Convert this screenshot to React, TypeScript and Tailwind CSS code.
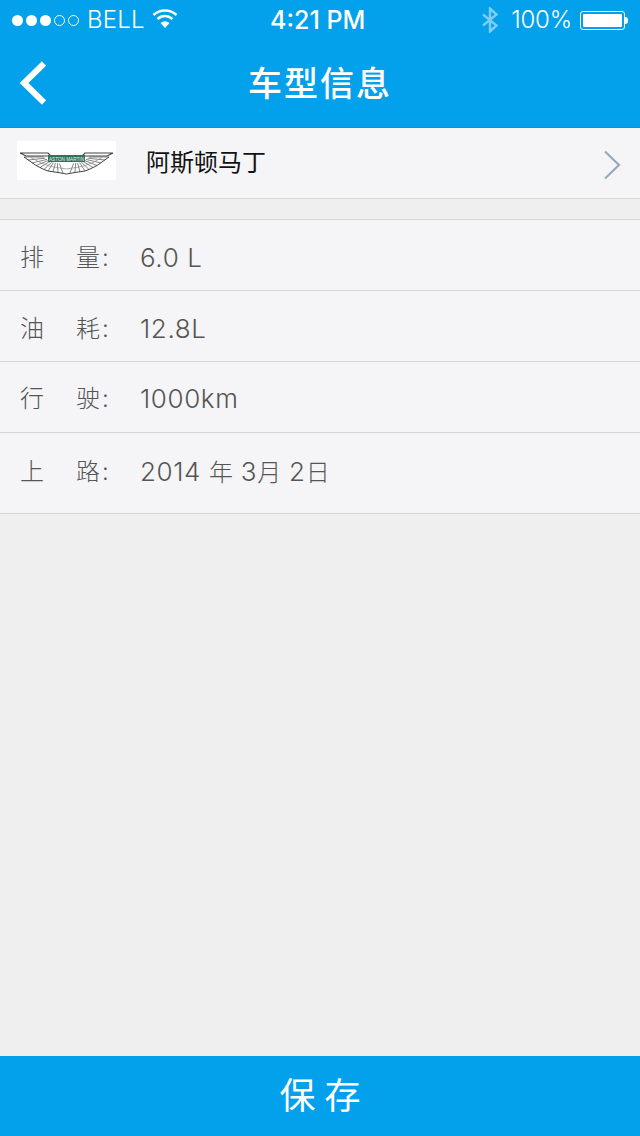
const font = "font-['Inter','Noto_Sans_CJK_SC',sans-serif]";

const specs = [
  { a: '排', b: '量', h: 'h-[71px] pt-[6px]', value: <>6.0 L</> },
  { a: '油', b: '耗', h: 'h-[71px] pt-[6px]', value: <>12.8L</> },
  { a: '行', b: '驶', h: 'h-[71px] pt-[3px]', value: <>1000km</> },
  {
    a: '上',
    b: '路',
    h: 'h-[81px] pb-[3px]',
    value: (
      <>
        2014 <span className="text-[24px] tracking-normal">年</span> 3<span className="text-[24px] tracking-normal">月</span> 2
        <span className="text-[24px] tracking-normal">日</span>
      </>
    ),
  },
];

const fanEnds = [
  [7, 16],
  [11, 19],
  [15, 22],
  [19, 24.5],
  [23, 26.5],
  [27, 28.5],
  [31, 30],
  [36, 31],
  [41, 31.5],
  [46, 32],
];

function AstonLogo() {
  return (
    <svg width="99" height="39" viewBox="0 0 99 39" className="bg-white shrink-0">
      <g fill="none" stroke="#666" strokeWidth="0.8">
        {fanEnds.map(([x, y]) => (
          <g key={x}>
            <path d={`M${40 - (40 - x) * 0.4} ${16 + (y - 16) * 0.4} L${x} ${y}`} />
            <path d={`M${59 + (40 - x) * 0.4} ${16 + (y - 16) * 0.4} L${99 - x} ${y}`} />
          </g>
        ))}
        <path d="M3 12 H31 L34 15 H9 Z" strokeWidth="1.1" stroke="#444" />
        <path d="M96 12 H68 L65 15 H90 Z" strokeWidth="1.1" stroke="#444" />
        <path d="M7 16 L19 24.5 L27 28.5 L31 30 L41 31.5 L49.5 33 L58 31.5 L68 30 L72 28.5 L80 24.5 L92 16" strokeWidth="1" stroke="#444" />
        <path d="M14 16.5 L24 22 L34 25.5 L49.5 28 L65 25.5 L75 22 L85 16.5" strokeWidth="0.7" stroke="#888" />
      </g>
      <rect x="31" y="14" width="37" height="7" fill="#35705c" />
      <text x="32" y="19.8" textLength="35" lengthAdjust="spacingAndGlyphs" fontSize="5.6" fill="#e8f0ec" fontFamily="Liberation Sans, sans-serif">
        ASTON MARTIN
      </text>
    </svg>
  );
}

export default function App() {
  return (
    <div className={`w-[640px] h-[1136px] flex flex-col bg-[#efefef] ${font}`}>
      <header className="h-[128px] shrink-0 bg-[#03a0eb] border-b border-[#0b93d4] text-white flex flex-col">
        <div className="relative h-[40px] flex items-center justify-between pl-3 pr-[12px] font-light text-[24px]">
          <div className="flex items-center">
            <div className="flex gap-[3px]">
              <span className="w-[11px] h-[11px] rounded-full bg-white" />
              <span className="w-[11px] h-[11px] rounded-full bg-white" />
              <span className="w-[11px] h-[11px] rounded-full bg-white" />
              <span className="w-[11px] h-[11px] rounded-full border border-white" />
              <span className="w-[11px] h-[11px] rounded-full border border-white" />
            </div>
            <span className="ml-[8px] leading-none tracking-[0.2px]">BELL</span>
            <svg width="26" height="20" viewBox="0 0 26 20" className="ml-[7px] mb-1" fill="none" stroke="white" strokeWidth="2.4">
              <path d="M1.5 7 C8 1 18 1 24.5 7" />
              <path d="M5.5 11 C10 7 16 7 20.5 11" />
              <path d="M13 20 L8.5 15 C11.5 12.8 14.5 12.8 17.5 15 Z" fill="white" stroke="none" />
            </svg>
          </div>
          <span className="absolute left-[270px] top-[4px] text-[25px] font-medium leading-[32px]">4:21 PM</span>
          <div className="flex items-center">
            <svg width="16" height="26" viewBox="0 0 16 26" fill="none" stroke="#7fcdf3" strokeWidth="2.4">
              <path d="M1 7.5 L14.5 18.5 L8 24.5 V1.5 L14.5 7.5 L1 18.5" />
            </svg>
            <span className="ml-[13px] leading-none tracking-[-0.2px]">100%</span>
            <div className="ml-[8px] flex items-center">
              <div className="w-[45px] h-[19px] rounded-[3px] border border-white p-[2px]">
                <div className="w-full h-full rounded-[1px] bg-white" />
              </div>
              <div className="w-[3px] h-[7px] bg-white rounded-r-sm" />
            </div>
          </div>
        </div>
        <div className="relative flex-1 flex items-center justify-center">
          <svg width="28" height="44" viewBox="0 0 28 44" fill="none" stroke="white" strokeWidth="6" className="absolute left-[19px] top-[21px]">
            <path d="M25 2.5 L5 22 L25 41.5" />
          </svg>
          <h1 className="text-[34px] font-medium tracking-[2px] leading-none">车型信息</h1>
        </div>
      </header>

      <div className="h-[71px] shrink-0 bg-[#f5f5f7] border-b border-[#d6d6d6] flex items-center pl-[17px] pr-[19px]">
        <div className="mb-[6px]">
          <AstonLogo />
        </div>
        <span className="ml-[30px] text-[24px] text-[#111] leading-none mb-[1px]">阿斯顿马丁</span>
        <svg width="18" height="30" viewBox="0 0 18 30" fill="none" stroke="#9aa9b8" strokeWidth="2.2" className="ml-auto mt-[4px]">
          <path d="M2 1.5 L16 15 L2 28.5" />
        </svg>
      </div>

      <div className="mt-[20px] shrink-0 border-t border-[#d6d6d6] bg-[#f5f5f7]">
        {specs.map((row) => (
          <div key={row.a} className={`${row.h} border-b border-[#d6d6d6] flex items-center pl-[20px] text-[24px] font-light text-[#555] leading-none`}>
            <span className="w-[56px]">{row.a}</span>
            <span className="w-[64px] tracking-[2px]">{row.b}:</span>
            <span className="text-[26px] tracking-[0.6px]">{row.value}</span>
          </div>
        ))}
      </div>

      <div className="flex-1" />

      <button className="h-[80px] shrink-0 bg-[#03a0eb] text-white text-[36px] tracking-[9px] pl-[9px] flex items-center justify-center">
        保存
      </button>
    </div>
  );
}
